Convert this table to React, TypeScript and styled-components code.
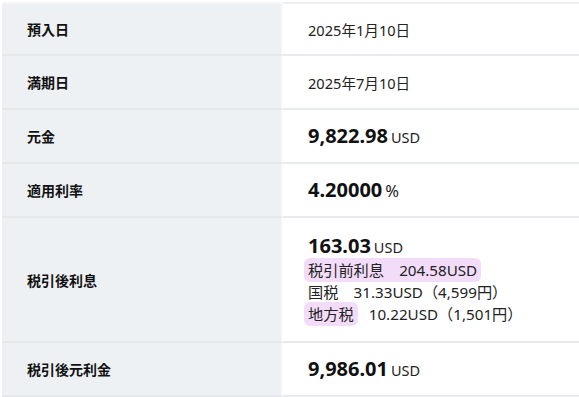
import React, { ReactElement } from "react";
import styled, { createGlobalStyle } from "styled-components";

const GlobalStyle = createGlobalStyle`
  html, body {
    margin: 0;
    padding: 0;
    background: #ffffff;
    font-family: "Noto Sans", "Noto Sans CJK JP", sans-serif;
    color: #222222;
  }
`;

const Table = styled.div`
  display: grid;
  grid-template-columns: 281px 1fr;
  width: 577px;
  margin: 2px 0 0 2px;
`;

const LabelCell = styled.div<{ $tall?: boolean; $first?: boolean }>`
  box-sizing: border-box;
  display: flex;
  align-items: center;
  height: ${p => (p.$tall ? 125 : 54)}px;
  padding-left: 25px;
  background: #eef1f4;
  border-top: ${p => (p.$first ? "2px solid #f4f6f8" : "none")};
  border-bottom: 2px solid #e4e8eb;
  border-right: 2px solid #f8f9fa;
  font-family: "Noto Sans CJK JP", sans-serif;
  font-size: 14px;
  font-weight: 700;
  color: #111111;
`;

const ValueCell = styled.div<{ $tall?: boolean; $first?: boolean }>`
  box-sizing: border-box;
  display: flex;
  flex-direction: column;
  justify-content: center;
  height: ${p => (p.$tall ? 125 : 54)}px;
  padding-left: 25px;
  border-top: ${p => (p.$first ? "2px solid #eceef1" : "none")};
  border-bottom: 2px solid #e8ebee;
  font-family: "Noto Sans CJK JP", sans-serif;
  font-size: 14px;
`;

const Plain = styled.span`
  font-family: "Noto Sans", "Noto Sans CJK JP", sans-serif;
  font-size: 14.6px;
  color: #222222;
`;

const Big = styled.div`
  display: flex;
  align-items: baseline;
  line-height: 24px;
`;

const Amount = styled.span`
  font-family: "Noto Sans", sans-serif;
  font-size: 20px;
  font-weight: 700;
  color: #111111;
`;

const Unit = styled.span<{ $percent?: boolean }>`
  margin-left: 3px;
  font-family: "Noto Sans", sans-serif;
  font-size: ${p => (p.$percent ? 16.5 : 14.5)}px;
  color: #222222;
`;

const Detail = styled.div`
  font-family: "Noto Sans", "Noto Sans CJK JP", sans-serif;
  font-size: 15.2px;
  line-height: 22px;
  color: #222222;
  white-space: pre;
`;

const Marker = styled.span`
  background: rgba(226, 178, 242, 0.45);
  border-radius: 6px;
  padding: 2px 4px;
  margin: 0 -4px;
`;

interface Row {
  label: string;
  amount?: string;
  unit?: string;
  text?: string;
}

const rows: Row[] = [
  { label: "預入日", text: "2025年1月10日" },
  { label: "満期日", text: "2025年7月10日" },
  { label: "元金", amount: "9,822.98", unit: "USD" },
  { label: "適用利率", amount: "4.20000", unit: "%" }
];

function App(): ReactElement {
  return (
    <>
      <GlobalStyle />
      <Table>
        {rows.map((row, i) => (
          <React.Fragment key={row.label}>
            <LabelCell $first={i === 0}>{row.label}</LabelCell>
            <ValueCell $first={i === 0}>
              {row.text ? (
                <Plain>{row.text}</Plain>
              ) : (
                <Big>
                  <Amount>{row.amount}</Amount>
                  <Unit $percent={row.unit === "%"}>{row.unit}</Unit>
                </Big>
              )}
            </ValueCell>
          </React.Fragment>
        ))}

        <LabelCell $tall>税引後利息</LabelCell>
        <ValueCell $tall>
          <Big>
            <Amount>163.03</Amount>
            <Unit>USD</Unit>
          </Big>
          <Detail>
            <Marker>税引前利息　204.58USD</Marker>
          </Detail>
          <Detail>国税　31.33USD（4,599円）</Detail>
          <Detail>
            <Marker>地方税</Marker>　10.22USD（1,501円）
          </Detail>
        </ValueCell>

        <LabelCell>税引後元利金</LabelCell>
        <ValueCell>
          <Big>
            <Amount>9,986.01</Amount>
            <Unit>USD</Unit>
          </Big>
        </ValueCell>
      </Table>
    </>
  );
}

export default App;
